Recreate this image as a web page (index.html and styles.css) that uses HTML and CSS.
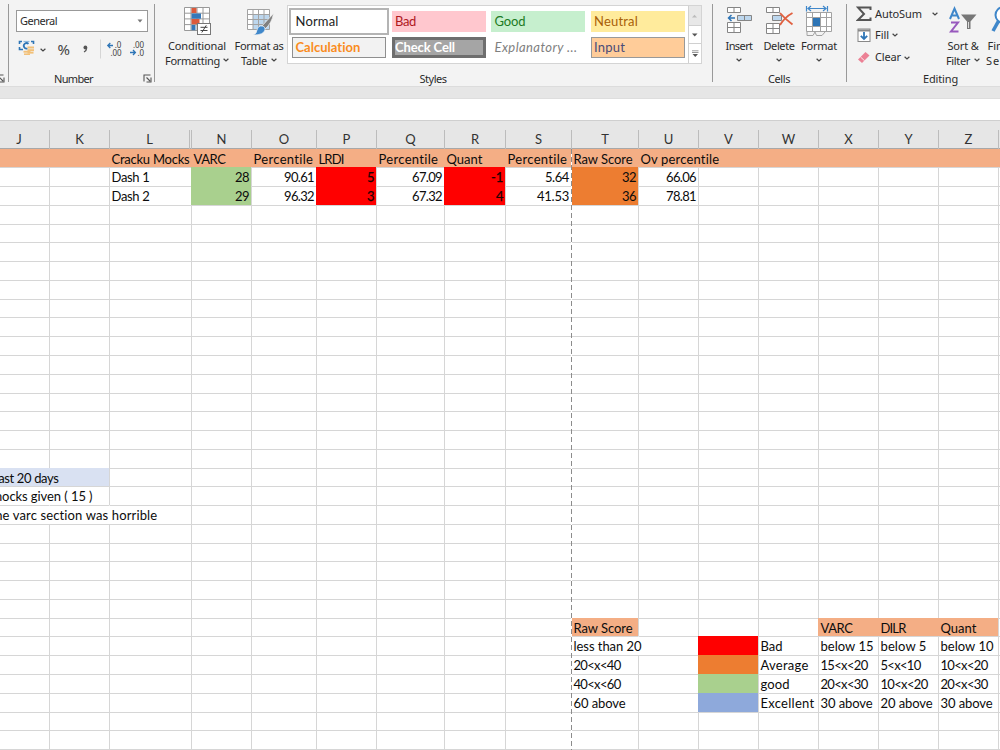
FILE: index.html
```html
<!DOCTYPE html>
<html lang="en">
<head>
<meta charset="utf-8">
<title>Mock scores</title>
<link rel="stylesheet" href="styles.css">
</head>
<body>
<svg width="0" height="0" class="defs"><defs>
<symbol id="chev" viewBox="0 0 6 4"><path d="M.6 .7L3 2.9L5.4 .7" fill="none" stroke="#444" stroke-width="1.2"/></symbol>
<symbol id="launch" viewBox="0 0 9 9"><path d="M1 7.5V1H7.5M3.5 3.5L7 7M8 3.5V8H3.5" fill="none" stroke="#555" stroke-width="1.1"/></symbol>
</defs></svg>
<header class="ribbon">
  <section class="group g-edge"><svg class="launch"><use href="#launch"/></svg></section>
  <section class="group g-number">
    <div class="combo"><span data-w="37">General</span><svg width="6" height="4"><path d="M.5 .5H5.500L3 3.500Z" fill="#777"/></svg></div>
    <div class="numrow">
      <svg width="140" height="24" viewBox="0 0 140 24">
        <path d="M3.500 7V4.500H6M15 4.500H17.500V7M3.500 10V12.500H7" fill="none" stroke="#2e75b6" stroke-width="1.600"/>
        <path d="M7.500 4.500H13.500" stroke="#8db8de" stroke-width="1.200"/>
        <path d="M12.500 6.800A2.800 2.800 0 1 0 11.500 11.500" fill="none" stroke="#2e75b6" stroke-width="1.800"/>
        <g fill="#f2c078"><rect x="11.500" y="9.500" width="6.500" height="2"/><rect x="11.500" y="12.200" width="6.500" height="2"/><rect x="11.500" y="14.800" width="6" height="1.800"/><rect x="7.500" y="13.800" width="7" height="1.900"/><rect x="8" y="16.400" width="6" height="1.600"/></g>
        <use href="#chev" x="24" y="11" width="6" height="4"/>
        <path d="M84.500 2.500V21.500" stroke="#d5d5d5"/>
        <text x="41.500" y="17.500" class="pct">%</text>
        <circle cx="69.400" cy="10.500" r="1.900" fill="#555"/><path d="M70.700 11Q70.700 13.500 68 15" fill="none" stroke="#555" stroke-width="1.200"/>
        <g class="dec"><text x="98.800" y="11" textLength="6.500">.0</text><text x="94.500" y="19" textLength="11">.00</text><text x="117" y="11" textLength="11">.00</text><text x="121.500" y="19" textLength="6.500">.0</text></g>
        <g fill="none" stroke="#2e75b6" stroke-width="1.300"><path d="M97 8.500H91.800M94.300 6L91.800 8.500L94.300 11"/><path d="M114 15.500H119.400M117 13L119.400 15.500L117 18"/></g>
      </svg>
    </div>
    <div class="caption"><span data-w="39">Number</span></div><svg class="launch"><use href="#launch"/></svg>
  </section>
  <section class="group g-styles">
    <div class="body">
      <div class="big cond">
        <svg width="30" height="31" viewBox="0 0 30 31"><rect x="2.5" y="2.5" width="25" height="23" fill="#fff"/><path d="M2.5 2.5H27.5V25.5H2.5ZM2.5 8.2H27.5M2.5 13.9H27.5M2.5 19.6H27.5M9 2.5V25.5M15 2.5V25.5M21 2.5V25.5" fill="none" stroke="#999"/><rect x="9.5" y="3" width="5" height="5" fill="#dc5a3c"/><rect x="9.5" y="8.5" width="9.5" height="5.2" fill="#3578b9"/><rect x="9.5" y="14" width="8" height="5.2" fill="#dc5a3c"/><rect x="9.5" y="20" width="4" height="5.2" fill="#3578b9"/><rect x="15.5" y="18.5" width="13" height="11" fill="#fff" stroke="#777"/><path d="M18.5 22.3H25.5M18.5 25.5H25.5M24.3 20.3L19.8 27.5" stroke="#444" fill="none"/></svg>
        <span data-w="58">Conditional</span><div><span data-w="55">Formatting</span><svg class="chev"><use href="#chev"/></svg></div>
      </div>
      <div class="big fmt">
        <svg width="30" height="31" viewBox="0 0 30 31"><rect x="3.500" y="4.500" width="22" height="20" fill="#fff"/><path d="M9 9.500H25.500V24.500H9Z" fill="#bdd7ee"/><path d="M3.500 4.500H25.500V24.500H3.500ZM3.500 9.500H25.500M3.500 14.500H25.500M3.500 19.500H25.500M9 4.500V24.500M14.500 4.500V24.500M20 4.500V24.500" fill="none" stroke="#a2a2a2"/><path d="M29.500 8.500L18 21L21 24Q28 18 29.500 8.500Z" fill="#808080" stroke="#f3f3f3" stroke-width=".7"/><path d="M16.500 21Q21.500 20.500 21 25Q19.500 30 9.500 30Q13 28 13 25Q13.500 21.500 16.500 21Z" fill="#3f87ca" stroke="#f3f3f3" stroke-width=".7"/></svg>
        <span data-w="49">Format as</span><div><span data-w="26">Table</span><svg class="chev"><use href="#chev"/></svg></div>
      </div>
      <div class="gallery">
        <div class="swatches">
          <div class="sw normal"><span data-w="43">Normal</span></div><div class="sw bad"><span data-w="21">Bad</span></div><div class="sw good"><span data-w="31">Good</span></div><div class="sw neutral"><span data-w="44">Neutral</span></div>
          <div class="sw calc"><span data-w="65">Calculation</span></div><div class="sw check"><span data-w="60">Check Cell</span></div><div class="sw expl"><span data-w="83">Explanatory ...</span></div><div class="sw input"><span data-w="31">Input</span></div>
        </div>
        <div class="scroll"><i class="off"><svg width="6" height="4"><path d="M0 3.500H5L2.500 .8Z" fill="#bbb"/></svg></i><i><svg width="6" height="4"><path d="M0 .5H5.500L2.750 3.500Z" fill="#555"/></svg></i><i><svg width="7" height="8"><path d="M0 .8H6.500M0 2.500H6.500" stroke="#999"/><path d="M.5 4H6L3.250 7Z" fill="#555"/></svg></i></div>
      </div>
    </div>
    <div class="caption"><span data-w="27">Styles</span></div>
  </section>
  <section class="group g-cells">
    <div class="body">
      <div class="big"><svg width="30" height="31" viewBox="0 0 30 31"><g fill="#fff" stroke="#858585"><path d="M3.500 2.500H16.500V7.500H3.500ZM10 2.500V7.500"/><path d="M3.500 17.500H16.500V27.500H3.500ZM3.500 22.500H16.500M10 17.500V27.500"/><path d="M13.500 10.500H27.500V15.500H13.500ZM20.500 10.500V15.500" fill="#bdd7ee"/></g><path d="M11 13H4.500M7.500 10L4.500 13L7.500 16" fill="none" stroke="#2e75b6" stroke-width="1.500"/></svg><span data-w="27">Insert</span><div><svg class="chev"><use href="#chev"/></svg></div></div>
      <div class="big"><svg width="30" height="31" viewBox="0 0 30 31"><g fill="#fff" stroke="#858585"><path d="M2.500 2.500H15.500V7.500H2.500ZM9 2.500V7.500"/><path d="M2.500 18.500H15.500V28.500H2.500ZM2.500 23.500H15.500M9 18.500V28.500"/><path d="M8.500 10.500H17.500V15.500H8.500Z" fill="#bdd7ee"/></g><path d="M16 8Q21 14 28.500 19.500M28.500 8Q21 12 16 20" fill="none" stroke="#e06040" stroke-width="1.900"/></svg><span data-w="31">Delete</span><div><svg class="chev"><use href="#chev"/></svg></div></div>
      <div class="big"><svg width="30" height="31" viewBox="0 0 30 31"><path d="M2.500 7.500H27.500V26.500H2.500Z" fill="#fff"/><path d="M2.500 7.500H27.500V26.500H2.500ZM2.500 12.500H27.500M2.500 21.500H27.500M8.500 7.500V26.500M16.500 7.500V26.500M22.500 7.500V26.500M3 26.500V30.500H9L11 27L12.500 30.500H18L21 27" fill="none" stroke="#a2a2a2"/><rect x="9" y="13" width="7" height="8" fill="#2e75b6"/><path d="M2.500 1V6.500M23.500 1V6.500M4 3.500H22M7 1L4 3.500L7 6M19 1L22 3.500L19 6" fill="none" stroke="#3f87ca" stroke-width="1.200"/></svg><span data-w="36">Format</span><div><svg class="chev"><use href="#chev"/></svg></div></div>
    </div>
    <div class="caption"><span data-w="22">Cells</span></div>
  </section>
  <section class="group g-edit">
    <div class="body">
      <div class="tools">
        <div><svg width="16" height="16"><path d="M14.500 4V1.500H2L8 8L2 14H14.500V11.500" fill="none" stroke="#555" stroke-width="2"/></svg><span data-w="47">AutoSum</span><svg class="chev far"><use href="#chev"/></svg></div>
        <div><svg width="16" height="16"><rect x="2" y="2" width="12" height="12.500" fill="#fff" stroke="#888"/><path d="M2 3.500H14" stroke="#888" stroke-width="2"/><path d="M8 5V12M4.800 8.800L8 12L11.200 8.800" fill="none" stroke="#2e75b6" stroke-width="1.800"/></svg><span data-w="14">Fill</span><svg class="chev"><use href="#chev"/></svg></div>
        <div><svg width="16" height="16"><path d="M2 9.500L9.500 2L13.500 5.500L6 13Z" fill="#ec8195"/><path d="M4.500 7L8.500 10.700" stroke="#fff" stroke-width=".8"/></svg><span data-w="26">Clear</span><svg class="chev"><use href="#chev"/></svg></div>
      </div>
      <div class="big sort"><svg width="30" height="31" viewBox="0 0 30 31"><g fill="none" stroke-width="2"><path d="M2 14L6.500 3.500L11 14M3.500 10.500H9.500" stroke="#3f87ca"/><path d="M3 17.500H10L3 26.500H10.500" stroke="#9859bd"/></g><path d="M13 9.500H28.500L22.500 16.500V24H19V16.500Z" fill="#777"/><path d="M20.500 17V23" stroke="#ddd"/></svg><span data-w="31">Sort &amp;</span><div><span data-w="24">Filter</span><svg class="chev"><use href="#chev"/></svg></div></div>
      <div class="big find"><svg width="30" height="31" viewBox="0 0 30 31"><circle cx="14.500" cy="10" r="8" fill="#fff" stroke="#3f87ca" stroke-width="2"/><path d="M9.500 16L4 26" stroke="#3f87ca" stroke-width="3.500"/></svg><span data-w="33">Find &amp;</span><div><span data-w="36">Select</span></div></div>
    </div>
    <div class="caption"><span data-w="35">Editing</span></div>
  </section>
</header>
<div class="gap"></div>
<div class="formula"></div>
<main class="sheet" id="sheet"></main>
<script src="sheet.js"></script>
</body>
</html>
```
FILE: styles.css
```css
*{box-sizing:border-box}
body{margin:0;width:1000px;height:750px;overflow:hidden;background:#fff;font-family:"Noto Sans","Open Sans",sans-serif;font-size:11px;color:#2b2b2b}
svg{display:block;flex:none}
.defs{position:absolute}
span{white-space:nowrap}
[data-w]{display:inline-block}
.ribbon{display:flex;height:87px;background:#f3f3f3;border-bottom:1px solid #dcdcdc;overflow:hidden}
.group{position:relative;flex:none;height:82px;padding-top:5px}
.group::after{content:"";position:absolute;right:0;top:4px;width:1px;height:78px;background:#999}
.g-edge{width:9px}
.g-edge .launch{right:4px}
.g-number{width:146px}
.g-styles{width:558px}
.g-cells{width:134px}
.g-edit{width:187px}
.g-edit::after{display:none}
.launch{position:absolute;right:3px;top:74px;width:9px;height:9px}
.body{display:flex;height:66px}
.caption{height:16px;line-height:16px;text-align:center}
.g-number .caption{padding-right:17px}
.g-styles .caption,.g-cells .caption{padding-right:2px}
.g-edit .caption{width:187px}
.combo{display:flex;align-items:center;justify-content:space-between;width:132px;height:22px;margin:5px 0 0 7px;padding:0 4px 1px 3px;border:1px solid #999;background:#fff}
.numrow{height:39px;padding:5px 0 0 7px}
.pct{font:15px "Noto Sans",sans-serif;fill:#444}
.dec{font:8px "Noto Sans",sans-serif;fill:#444}
.big{display:flex;flex-direction:column;align-items:center;width:40px;line-height:15px}
.big>svg{margin-bottom:2px}
.big>div{display:flex;align-items:center;gap:4px;height:14px}
.chev{width:6px;height:4px}
.cond{width:68px;margin-left:8px}
.cond>div{gap:3px}
.fmt{width:56px}
.g-cells .body{padding-left:6px}
.gallery{display:flex;width:415px;height:59px;border:1px solid #d4d4d4;background:#fff}
.swatches{display:grid;grid-template-columns:repeat(4,94px);grid-auto-rows:21px;gap:5px 5.5px;padding:5px 0 0 4px;width:400px}
.sw{display:flex;align-items:center;padding:0 3.500px 1px;font:13px/18px Lato,sans-serif}
.normal{color:#222;outline:2px solid #b4b4b4;outline-offset:1px}
.bad{background:#ffc7ce;color:#b0181e}
.good{background:#c6efce;color:#1c7a24}
.neutral{background:#ffeb9c;color:#a86008}
.calc{background:#f2f2f2;border:1px solid #8f8f8f;color:#fa8c1e;font-weight:700;padding:0 2.500px 1px}
.check{background:#a5a5a5;border:3px solid #6e6e6e;color:#fff;font-weight:700;padding:0 .5px 1px}
.expl{color:#7f7f7f;font-style:italic}
.input{background:#ffcc99;border:1px solid #999;color:#4b4b78;padding:0 2.500px 1px}
.scroll{display:grid;grid-template-rows:20px 18px 19px;width:13px;border-left:1px solid #d0d0d0}
.scroll i{display:flex;align-items:center;justify-content:center;border-bottom:1px solid #d0d0d0}
.scroll i:last-child{border-bottom:0}
.scroll .off{background:#e8e8e8}
.tools{display:flex;flex-direction:column;width:93px;padding-left:9px;height:66px}
.tools>div{display:flex;align-items:center;height:21.500px;gap:3px}
.tools span{margin-top:-2px}
.tools .far{margin-left:7px}
.tools>div:first-child{height:18px}
.tools>div:nth-child(2){height:24px}
.sort{width:46px}
.find{width:34px;margin-left:1px}
.gap{height:11px;background:#e6e6e6}
.formula{height:23px;background:#fff;border-bottom:1px solid #cfcfcf;border-top:1px solid #dedede}
.sheet{overflow:hidden;font:13px/19px Lato,sans-serif;color:#0c0c0c}
.heads{display:grid;height:28px;padding-top:9px;background:#e6e6e6;border-bottom:1px solid #a8a8a8}
.heads div{display:flex;align-items:center;justify-content:center;border-left:1px solid #bcbcbc;color:#333}
.heads div:first-child{border-left:0;padding-right:11px}
.heads .hid{border-right:1px solid #bcbcbc;margin-right:1px}
.rows{display:grid}
.cell{min-width:0;border-left:1px solid #d6d6d6;border-top:1px solid #d6d6d6;padding:0 2px 0 1.500px;white-space:nowrap;line-height:19px}
.cell span{position:relative;z-index:1}
.num{text-align:right}
.head,.red,.orange,.green,.blue,.pale{border-color:transparent}
.head{background:#f4ae85}
.red{background:#f00}
.red span{color:#200000;-webkit-text-stroke:.25px #200000}
.orange{background:#ed7d31}
.green{background:#a9d08e}
.blue{background:#8ea9db}
.pale{background:#d9e1f2}
.open,.col-t{border-left-color:transparent}
.col-j{border-left:0}
.page-break{width:1px;background:repeating-linear-gradient(#8c8c8c 0 5px,#fff 5px 8px)}
```
FILE: sheet.js
```js
const edges = [0, 49, 109, 191, 251, 316, 376, 444, 505, 571, 638, 698, 758, 818, 878, 938, 998, 1058];
const letters = ["J", "K", "L", "N", "O", "P", "Q", "R", "S", "T", "U", "V", "W", "X", "Y", "Z", ""];
const columns = edges.slice(1).map((x, i) => (x - edges[i]) + "px").join(" ");
const top0 = 149;
const lineAt = k => k === 0 ? top0 : Math.round(148.6 + 18.765 * k);

// "column row": [text, text width, classes, text offset]
const cells = {
  "L0": ["Cracku Mocks", 78], "N0": ["VARC", 32], "O0": ["Percentile", 60], "P0": ["LRDI", 25],
  "Q0": ["Percentile", 60], "R0": ["Quant", 36], "S0": ["Percentile", 60], "T0": ["Raw Score", 59],
  "U0": ["Ov percentile", 79],
  "L1": ["Dash 1", 38], "N1": ["28", 14, "num green"], "O1": ["90.61", 30, "num"], "P1": ["5", 7, "num red"],
  "Q1": ["67.09", 30, "num"], "R1": ["-1", 12, "num red"], "S1": ["5.64", 24, "num"],
  "T1": ["32", 14, "num orange"], "U1": ["66.06", 30, "num"],
  "L2": ["Dash 2", 38], "N2": ["29", 14, "num green"], "O2": ["96.32", 30, "num"], "P2": ["3", 7, "num red"],
  "Q2": ["67.32", 30, "num"], "R2": ["4", 7, "num red"], "S2": ["41.53", 32, "num"],
  "T2": ["36", 14, "num orange"], "U2": ["78.81", 30, "num"],
  "J17": ["last 20 days", 63, "pale", -6], "K17": ["", 0, "pale"],
  "J18": ["mocks given ( 15 )", 101, "", -10], "K18": ["", 0, "open"],
  "J19": ["The varc section was horrible", 170, "", -14], "K19": ["", 0, "open"], "L19": ["", 0, "open"],
  "T25": ["Raw Score", 59, "head"], "X25": ["VARC", 32, "head"], "Y25": ["DILR", 25, "head"], "Z25": ["Quant", 36, "head"],
  "T26": ["less than 20", 68], "U26": ["", 0, "open"], "V26": ["", 0, "red"], "W26": ["Bad", 22],
  "X26": ["below 15", 53], "Y26": ["below 5", 46], "Z26": ["below 10", 53],
  "T27": ["20<x<40", 47], "V27": ["", 0, "orange"], "W27": ["Average", 48],
  "X27": ["15<x<20", 47], "Y27": ["5<x<10", 40], "Z27": ["10<x<20", 47],
  "T28": ["40<x<60", 47], "V28": ["", 0, "green"], "W28": ["good", 29],
  "X28": ["20<x<30", 47], "Y28": ["10<x<20", 47], "Z28": ["20<x<30", 47],
  "T29": ["60 above", 52], "V29": ["", 0, "blue"], "W29": ["Excellent", 54],
  "X29": ["30 above", 52], "Y29": ["20 above", 52], "Z29": ["30 above", 52]
};

const sheet = document.getElementById("sheet");
const heads = document.createElement("div");
heads.className = "heads";
heads.style.gridTemplateColumns = columns;
letters.forEach(l => {
  const d = document.createElement("div");
  d.textContent = l;
  if (l === "L") d.className = "hid";
  heads.append(d);
});
const rows = document.createElement("div");
rows.className = "rows";
rows.style.gridTemplateColumns = columns;
rows.style.gridTemplateRows = Array.from({ length: 33 }, (_, k) => (lineAt(k + 1) - lineAt(k)) + "px").join(" ");
for (let r = 0; r < 33; r++) {
  letters.forEach((l, i) => {
    const [text, width, cls, offset] = cells[l + r] || ["", 0, ""];
    const c = document.createElement("div");
    c.className = "cell col-" + l.toLowerCase() + " " + (cls || "") + (r === 0 ? " head" : "");
    c.style.gridArea = (r + 1) + " / " + (i + 1);
    if (text) {
      const s = document.createElement("span");
      s.textContent = text;
      s.dataset.w = width;
      if (offset) s.style.marginLeft = offset + "px";
      c.append(s);
    }
    rows.append(c);
  });
}
const pageBreak = document.createElement("div");
pageBreak.className = "page-break";
pageBreak.style.gridArea = "1 / " + (letters.indexOf("T") + 1) + " / -1";
rows.append(pageBreak);
sheet.append(heads, rows);

// Tune tracking so every label takes its intended width.
document.querySelectorAll("[data-w]").forEach(s => {
  const natural = s.getBoundingClientRect().width;
  s.style.letterSpacing = ((s.dataset.w - natural) / s.textContent.length) + "px";
});
```
